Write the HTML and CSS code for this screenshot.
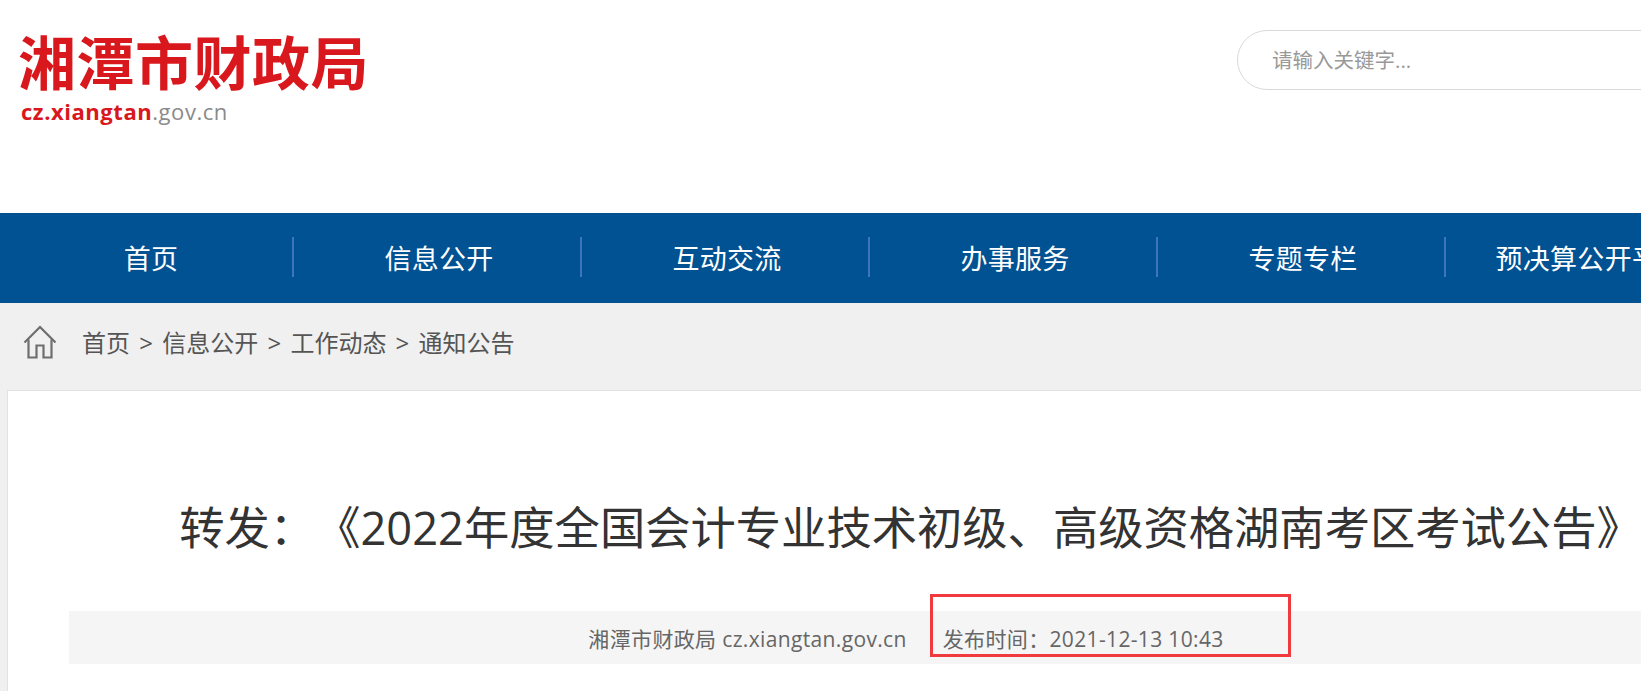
FILE: index.html
```html
<!DOCTYPE html>
<html lang="zh-CN">
<head>
  <meta charset="UTF-8" />
  <meta name="viewport" content="width=device-width, initial-scale=1.0" />
  <title>湘潭市财政局</title>
  <link rel="stylesheet" href="styles.css">
</head>
<body>
  <div class="page">
    <header class="header">
      <div class="logo">
        <div class="logo-name">湘潭市财政局</div>
        <div class="logo-url"><span class="logo-url-red">cz.xiangtan</span>.gov.cn</div>
      </div>
      <input class="search" type="text" placeholder="请输入关键字...">
    </header>

    <nav class="nav">
      <a class="nav-item" href="#">首页</a>
      <a class="nav-item" href="#">信息公开</a>
      <a class="nav-item" href="#">互动交流</a>
      <a class="nav-item" href="#">办事服务</a>
      <a class="nav-item" href="#">专题专栏</a>
      <a class="nav-item" href="#">预决算公开平台</a>
    </nav>

    <div class="main">
      <div class="crumbs">
        <svg class="home-icon" viewBox="0 0 34 34" fill="none" stroke="#6e6e6e" stroke-width="2.2">
          <path d="M1.5 17.5 17 2l15.5 15.5" />
          <path d="M5.5 14.5V32.5h8V20.5h7v12h8V14.5" />
        </svg>
        <span>首页 &gt; 信息公开 &gt; 工作动态 &gt; 通知公告</span>
      </div>

      <div class="card">
        <h1 class="title">转发：《2022年度全国会计专业技术初级、高级资格湖南考区考试公告》</h1>
        <div class="meta">
          <span>湘潭市财政局 cz.xiangtan.gov.cn</span>
          <span class="meta-time">发布时间：2021-12-13 10:43</span>
          <div class="mark"></div>
        </div>
      </div>
    </div>
  </div>
</body>
</html>
```

FILE: styles.css
```css
html, body { margin: 0; padding: 0; overflow: hidden; background: #fff; }
body { font-family: "Open Sans", "Noto Sans CJK SC", sans-serif; text-spacing-trim: space-all; }
.page { width: 1800px; }

.header { height: 213px; display: flex; justify-content: space-between; box-sizing: border-box; padding: 23px 0 0 18px; }
.logo-name { font-family: "Noto Sans CJK SC", sans-serif; font-size: 58px; line-height: 74px; font-weight: 700; letter-spacing: 0.5px; color: #d9181e; }
.logo-url { margin-left: 3px; font-size: 22px; line-height: 28px; color: #8a8a8a; letter-spacing: 0.55px; }
.logo-url-red { color: #d9181e; font-weight: 700; }
.search { width: 563px; height: 60px; margin-top: 7px; box-sizing: border-box; border: 1px solid #d9d9d9; border-radius: 30px; padding: 0 34px; font-family: inherit; font-size: 20.5px; outline: none; }
.search::placeholder { color: #999; }

.nav { height: 90px; background: #015293; display: flex; padding-left: 6px; }
.nav-item { width: 288px; height: 40px; margin-top: 24px; padding-left: 4px; box-sizing: border-box; border-right: 2px solid #3f74b8; display: flex; align-items: center; justify-content: center; color: #fff; font-size: 27px; letter-spacing: 0.3px; text-decoration: none; white-space: nowrap; }

.main { background: #f0f0f0; padding: 0 7px; height: 388px; }
.crumbs { height: 87px; box-sizing: border-box; padding: 0 0 10px 16px; display: flex; align-items: center; gap: 25px; color: #555; font-size: 24px; word-spacing: 3px; }
.home-icon { width: 34px; height: 34px; }

.card { background: #fff; border: 1px solid #e2e2e2; border-bottom: none; height: 301px; box-sizing: border-box; padding: 0 61px; }
.title { margin: 0; padding: 104px 0 0 21px; height: 116px; font-size: 45.3px; line-height: 66px; font-weight: 400; color: #333; text-align: center; white-space: nowrap; }
.meta { position: relative; height: 53px; box-sizing: border-box; padding-left: 12px; background: #f5f5f5; display: flex; justify-content: center; align-items: center; gap: 36px; color: #666; font-size: 21px; letter-spacing: 0.35px; }
.mark { position: absolute; left: 861px; top: -17px; width: 361px; height: 63px; box-sizing: border-box; border: 3px solid #f03a3e; }
```
